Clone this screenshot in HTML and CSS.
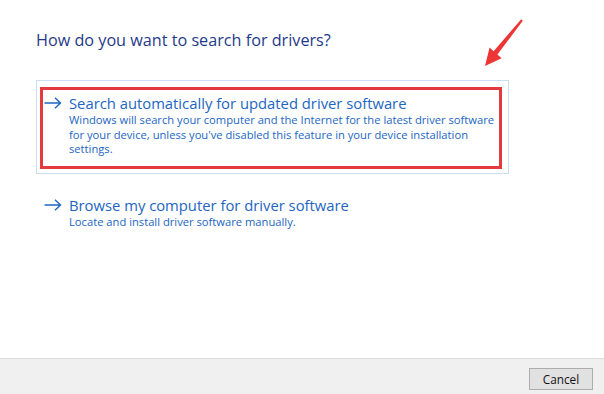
FILE: index.html
```html
<!DOCTYPE html>
<html lang="en">
<head>
    <meta charset="UTF-8">
    <title>Update Drivers</title>
    <link rel="stylesheet" href="styles.css">
</head>
<body>
    <div class="content">
        <h1 class="instruction">How do you want to search for drivers?</h1>

        <div class="option selected">
            <div class="highlight">
                <svg class="go-arrow" width="18" height="12" viewBox="0 0 18 12">
                    <path d="M0.5 6 H16.5 M11 0.8 L16.5 6 L11 11.2" fill="none" stroke="currentColor" stroke-width="1.4"/>
                </svg>
                <div>
                    <div class="option-title">Search automatically for updated driver software</div>
                    <div class="option-desc">Windows will search your computer and the Internet for the latest driver software<br>for your device, unless you've disabled this feature in your device installation<br>settings.</div>
                </div>
            </div>
        </div>

        <div class="option">
            <div class="highlight">
                <svg class="go-arrow" width="18" height="12" viewBox="0 0 18 12">
                    <path d="M0.5 6 H16.5 M11 0.8 L16.5 6 L11 11.2" fill="none" stroke="currentColor" stroke-width="1.4"/>
                </svg>
                <div>
                    <div class="option-title">Browse my computer for driver software</div>
                    <div class="option-desc">Locate and install driver software manually.</div>
                </div>
            </div>
        </div>

        <!-- red annotation arrow -->
        <svg class="pointer" width="44" height="54" viewBox="0 0 44 54">
            <polygon points="3,50 7.6,31.6 11.6,35.2 39.2,3.2 40.8,4.8 15.4,38.6 19.6,42.2" fill="#ee3535"/>
        </svg>
    </div>

    <div class="footer">
        <button class="btn">Cancel</button>
    </div>
</body>
</html>
```

FILE: styles.css
```css
:root {
    --instruction-color: #1f3a8a;
    --link-color: #2266c2;
    --selected-border: #c9def1;
    --mark-red: #e23a3d;
}

* {
    box-sizing: border-box;
}

body {
    margin: 0;
    height: 394px;
    display: flex;
    flex-direction: column;
    background-color: white;
    font-family: "Open Sans", "Noto Sans", sans-serif;
    overflow: hidden;
}

.content {
    flex: 1;
    position: relative;
    padding: 29px 0 0 36px;
}

.instruction {
    margin: 0 0 29px;
    font-size: 16.2px;
    font-weight: normal;
    line-height: 22px;
    color: var(--instruction-color);
}

.option {
    width: 473px;
    margin-bottom: 8px;
    padding: 6px 6px 4px 3px;
    border: 1px solid transparent;
}

.option.selected {
    border-color: var(--selected-border);
}

.highlight {
    display: grid;
    grid-template-columns: 18px 1fr;
    column-gap: 7px;
    padding: 3px 0 9.5px 1px;
    border: 3px solid transparent;
    color: var(--link-color);
}

.selected .highlight {
    border-color: var(--mark-red);
}

.go-arrow {
    margin-top: 4px;
}

.option-title {
    font-size: 14.8px;
    line-height: 20px;
}

.option-desc {
    font-size: 11.2px;
    line-height: 14.5px;
}

.pointer {
    position: absolute;
    left: 482px;
    top: 16px;
}

.footer {
    height: 36px;
    display: flex;
    justify-content: flex-end;
    align-items: flex-start;
    padding: 9px 11px 0 0;
    background-color: #f0f0f0;
    border-top: 1px solid #dcdcdc;
}

.btn {
    width: 64px;
    height: 22px;
    padding: 0;
    font-family: "Open Sans", "Noto Sans", sans-serif;
    font-size: 11.8px;
    color: #111;
    background-color: #e1e1e1;
    border: 1px solid #adadad;
    border-radius: 0;
}
```
